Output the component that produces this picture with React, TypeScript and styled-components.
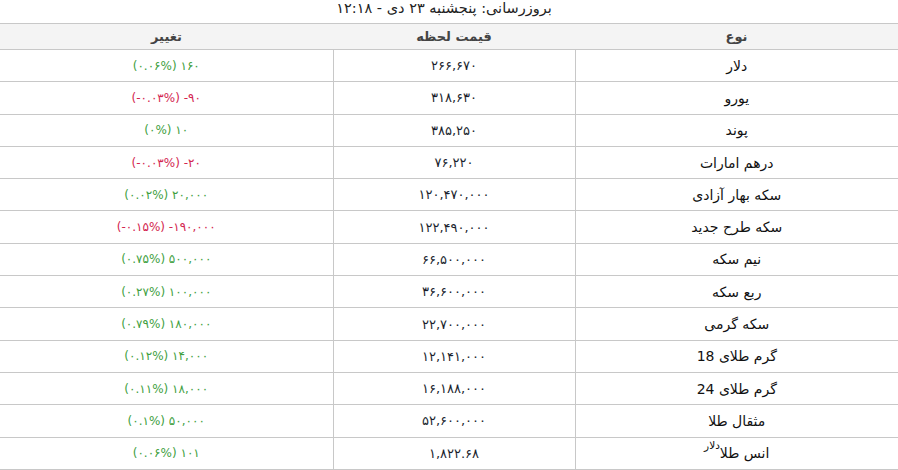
import styled, { createGlobalStyle } from 'styled-components';

const GlobalStyle = createGlobalStyle`
  body {
    margin: 0;
    background: #fff;
    font-family: "DejaVu Sans", "Noto Sans", sans-serif;
  }
`;

type Rate = {
  name: string;
  unit?: string;
  price: string;
  change: string;
  up: boolean;
};

const rates: Rate[] = [
  { name: 'دلار', price: '۲۶۶,۶۷۰', change: '(۰.۰۶%) ۱۶۰', up: true },
  { name: 'یورو', price: '۳۱۸,۶۳۰', change: '(-۰.۰۳%) -۹۰', up: false },
  { name: 'پوند', price: '۳۸۵,۲۵۰', change: '(۰%) ۱۰', up: true },
  { name: 'درهم امارات', price: '۷۶,۲۲۰', change: '(-۰.۰۳%) -۲۰', up: false },
  { name: 'سکه بهار آزادی', price: '۱۲۰,۴۷۰,۰۰۰', change: '(۰.۰۲%) ۲۰,۰۰۰', up: true },
  { name: 'سکه طرح جدید', price: '۱۲۲,۴۹۰,۰۰۰', change: '(-۰.۱۵%) -۱۹۰,۰۰۰', up: false },
  { name: 'نیم سکه', price: '۶۶,۵۰۰,۰۰۰', change: '(۰.۷۵%) ۵۰۰,۰۰۰', up: true },
  { name: 'ربع سکه', price: '۳۶,۶۰۰,۰۰۰', change: '(۰.۲۷%) ۱۰۰,۰۰۰', up: true },
  { name: 'سکه گرمی', price: '۲۲,۷۰۰,۰۰۰', change: '(۰.۷۹%) ۱۸۰,۰۰۰', up: true },
  { name: 'گرم طلای 18', price: '۱۲,۱۴۱,۰۰۰', change: '(۰.۱۲%) ۱۴,۰۰۰', up: true },
  { name: 'گرم طلای 24', price: '۱۶,۱۸۸,۰۰۰', change: '(۰.۱۱%) ۱۸,۰۰۰', up: true },
  { name: 'مثقال طلا', price: '۵۲,۶۰۰,۰۰۰', change: '(۰.۱%) ۵۰,۰۰۰', up: true },
  { name: 'انس طلا', unit: 'دلار', price: '۱,۸۲۲.۶۸', change: '(۰.۰۶%) ۱۰۱', up: true },
];

export default function App() {
  return (
    <Page dir="rtl">
      <GlobalStyle />
      <Updated>بروزرسانی: پنجشنبه ۲۳ دی - ۱۲:۱۸</Updated>
      <RateTable>
        <colgroup>
          <col style={{ width: 323 }} />
          <col style={{ width: 242 }} />
          <col style={{ width: 333 }} />
        </colgroup>
        <thead>
          <tr>
            <HeadCell>نوع</HeadCell>
            <HeadCell>قیمت لحظه</HeadCell>
            <HeadCell>تغییر</HeadCell>
          </tr>
        </thead>
        <tbody>
          {rates.map((r) => (
            <tr key={r.name}>
              <NameCell>
                {r.name}
                {r.unit && <Unit>{r.unit}</Unit>}
              </NameCell>
              <PriceCell>{r.price}</PriceCell>
              <ChangeCell $up={r.up}>{r.change}</ChangeCell>
            </tr>
          ))}
        </tbody>
      </RateTable>
    </Page>
  );
}

const Page = styled.div`
  width: 898px;
  height: 470px;
  overflow: hidden;
`;

const Updated = styled.div`
  height: 23px;
  line-height: 17px;
  padding-right: 10px;
  text-align: center;
  font-size: 14.5px;
  color: #222;
`;

const RateTable = styled.table`
  width: 898px;
  table-layout: fixed;
  border-collapse: collapse;
  border-spacing: 0;
`;

const HeadCell = styled.th`
  height: 25px;
  padding: 0;
  background: #f4f4f4;
  border-top: 1px solid #c8c8c8;
  border-bottom: 1px solid #c8c8c8;
  font-size: 13px;
  font-weight: bold;
  color: #444;
  text-align: center;
  vertical-align: middle;
`;

const Cell = styled.td`
  height: 31.3px;
  padding: 0;
  border-bottom: 1px solid #c8c8c8;
  text-align: center;
  vertical-align: middle;
`;

const NameCell = styled(Cell)`
  border-left: 1px solid #c8c8c8;
  font-size: 14px;
  color: #111;
`;

const Unit = styled.sup`
  font-size: 10.5px;
  line-height: 0;
  position: relative;
  top: -4px;
`;

const PriceCell = styled(Cell)`
  border-left: 1px solid #c8c8c8;
  direction: ltr;
  font-size: 13px;
  color: #1b1f2e;
`;

const ChangeCell = styled(Cell)<{ $up: boolean }>`
  direction: ltr;
  font-size: 12px;
  color: ${(p) => (p.$up ? '#3f9f3f' : '#d3264f')};
`;
